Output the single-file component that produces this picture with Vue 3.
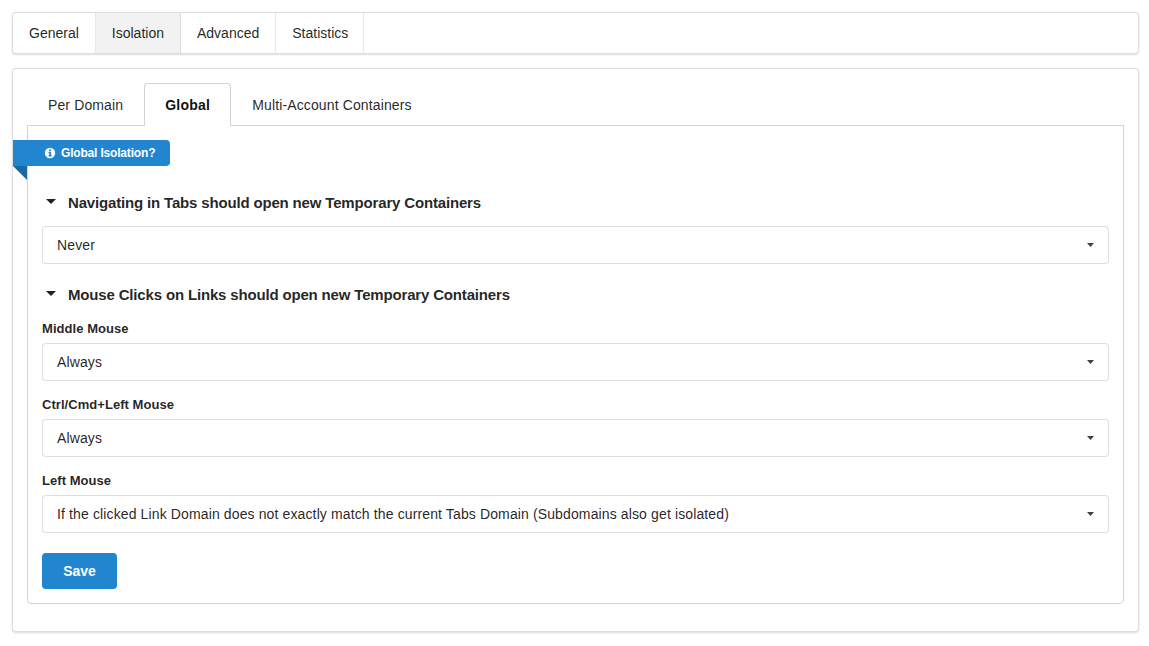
<script setup>
const topItems = [
  { name: 'General', active: false },
  { name: 'Isolation', active: true },
  { name: 'Advanced', active: false },
  { name: 'Statistics', active: false },
]
const subTabs = [
  { name: 'Per Domain', active: false },
  { name: 'Global', active: true },
  { name: 'Multi-Account Containers', active: false },
]
const mouseFields = [
  { label: 'Middle Mouse', value: 'Always' },
  { label: 'Ctrl/Cmd+Left Mouse', value: 'Always' },
  { label: 'Left Mouse', value: 'If the clicked Link Domain does not exactly match the current Tabs Domain (Subdomains also get isolated)' },
]
</script>

<template>
  <div class="page">
    <nav class="top-menu">
      <a v-for="item in topItems" :key="item.name" class="top-item" :class="{ active: item.active }">{{ item.name }}</a>
    </nav>

    <section class="segment">
      <div class="tabs">
        <a v-for="tab in subTabs" :key="tab.name" class="tab" :class="{ active: tab.active }">{{ tab.name }}</a>
      </div>

      <div class="panel">
        <div class="ribbon">
          <svg class="info" viewBox="0 0 12 12" aria-hidden="true">
            <path fill-rule="evenodd" d="M6 .8a5.2 5.2 0 1 0 0 10.4A5.2 5.2 0 0 0 6 .8zM5 2.600h2v1.700H5zM4.500 5h2.600v3.300h.6v1.100H4.500V8.300h.7V6.100h-.7z" />
          </svg>
          <span>Global Isolation?</span>
        </div>

        <h4 class="title first">
          <svg class="caret" viewBox="0 0 10 5" aria-hidden="true"><path d="M0 0h10L5 5z" /></svg>
          Navigating in Tabs should open new Temporary Containers
        </h4>
        <div class="select">
          <span>Never</span>
          <svg class="drop" viewBox="0 0 7 4" aria-hidden="true"><path d="M0 0h7L3.500 4z" /></svg>
        </div>

        <h4 class="title second">
          <svg class="caret" viewBox="0 0 10 5" aria-hidden="true"><path d="M0 0h10L5 5z" /></svg>
          Mouse Clicks on Links should open new Temporary Containers
        </h4>

        <div v-for="field in mouseFields" :key="field.label" class="field">
          <label class="label">{{ field.label }}</label>
          <div class="select">
            <span>{{ field.value }}</span>
            <svg class="drop" viewBox="0 0 7 4" aria-hidden="true"><path d="M0 0h7L3.500 4z" /></svg>
          </div>
        </div>

        <button class="save" type="button">Save</button>
      </div>
    </section>
  </div>
</template>

<style>
html, body { margin: 0; background: #fff; }
</style>

<style scoped>
.page {
  box-sizing: border-box;
  width: 1149px;
  padding: 12px 10px 14px 12px;
  font-family: "Liberation Sans", Arial, sans-serif;
  font-size: 14px;
  line-height: 20px;
  color: rgba(0, 0, 0, 0.87);
}
.top-menu {
  display: flex;
  height: 42px;
  box-sizing: border-box;
  background: #fff;
  border: 1px solid rgba(34, 36, 38, 0.15);
  border-radius: 4px;
  box-shadow: 0 1px 2px 0 rgba(34, 36, 38, 0.15);
}
.top-item {
  display: flex;
  align-items: center;
  padding: 0 16px;
  border-right: 1px solid rgba(34, 36, 38, 0.1);
}
.top-item:last-child { padding-right: 15px; }
.top-item.active { background: rgba(0, 0, 0, 0.05); }
.segment {
  margin-top: 14px;
  box-sizing: border-box;
  height: 564px;
  padding: 14px;
  background: #fff;
  border: 1px solid rgba(34, 36, 38, 0.15);
  border-radius: 4px;
  box-shadow: 0 1px 2px 0 rgba(34, 36, 38, 0.15);
}
.tabs {
  display: flex;
  height: 43px;
  box-sizing: border-box;
  border-bottom: 1px solid #d4d4d5;
}
.tab {
  display: flex;
  align-items: center;
  height: 42px;
  box-sizing: border-box;
  padding: 1px 21px 0;
  letter-spacing: 0.125px;
}
.tab.active {
  height: 43px;
  padding: 0 20px;
  background: #fff;
  border: 1px solid #d4d4d5;
  border-bottom: 0;
  border-radius: 4px 4px 0 0;
  font-weight: 700;
  letter-spacing: 0.25px;
  color: rgba(0, 0, 0, 0.95);
}
.panel {
  box-sizing: border-box;
  height: 479px;
  margin-top: -1px;
  padding: 14px;
  border: 1px solid #d4d4d5;
  border-radius: 0 0 4px 4px;
}
.ribbon {
  position: relative;
  display: flex;
  align-items: center;
  width: 157px;
  height: 26px;
  margin-left: -29px;
  padding-left: 32px;
  box-sizing: border-box;
  background: #2185d0;
  border-radius: 0 4px 4px 0;
  color: #fff;
  font-size: 12px;
  font-weight: 700;
  letter-spacing: -0.18px;
}
.ribbon::after {
  content: "";
  position: absolute;
  left: 0;
  top: 100%;
  border-style: solid;
  border-width: 0 14px 14px 0;
  border-color: transparent #1a69a4 transparent transparent;
}
.info {
  width: 12px;
  height: 12px;
  margin-right: 5px;
  margin-left: -1px;
  fill: #fff;
  flex: none;
}
.title {
  display: flex;
  align-items: center;
  margin: 0;
  font-size: 15px;
  line-height: 20px;
  font-weight: 700;
  letter-spacing: -0.165px;
  color: rgba(0, 0, 0, 0.87);
}
.title.first { margin-top: 27px; margin-bottom: 13px; }
.title.second { margin-top: 21px; margin-bottom: 15px; }
.caret {
  width: 10px;
  height: 5px;
  margin: -3px 12px 0 4px;
  fill: rgba(0, 0, 0, 0.87);
  flex: none;
}
.field { margin-bottom: 15px; }
.label {
  display: block;
  margin-bottom: 5px;
  font-size: 13px;
  line-height: 18px;
  font-weight: 700;
  letter-spacing: 0.05px;
}
.select {
  box-sizing: border-box;
  display: flex;
  align-items: center;
  justify-content: space-between;
  height: 38px;
  padding: 0 14px;
  letter-spacing: 0.126px;
  background: #fff;
  border: 1px solid rgba(34, 36, 38, 0.15);
  border-radius: 4px;
}
.drop {
  width: 7px;
  height: 4px;
  fill: rgba(0, 0, 0, 0.75);
  flex: none;
}
.save {
  display: block;
  width: 75px;
  height: 36px;
  margin-top: 20px;
  padding: 0;
  border: 0;
  border-radius: 4px;
  background: #2185d0;
  color: #fff;
  font-family: inherit;
  font-size: 14px;
  font-weight: 700;
}
</style>
